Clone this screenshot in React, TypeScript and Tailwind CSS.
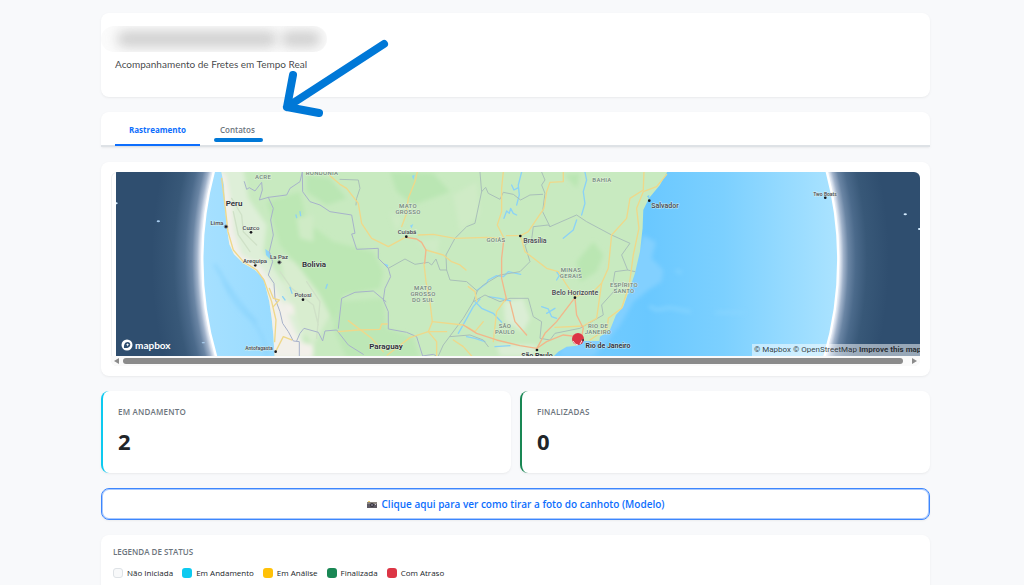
import { useState } from "react"
import clsx from "clsx"

type Label = {
  text: string[]
  x: number
  y: number
  className: string
}

const COUNTRY = "fill-[#2c2c38] text-[8px] font-semibold"
const CITY = "fill-[#45454f] text-[7px] font-medium"
const SMALL = "fill-[#45454f] text-[6px] font-medium"
const STATE = "fill-[#72857a] text-[6px] font-medium tracking-wider"

const labels: Label[] = [
  { text: ["Peru"], x: 234, y: 206, className: COUNTRY },
  { text: ["Bolivia"], x: 314, y: 267, className: COUNTRY },
  { text: ["Paraguay"], x: 386, y: 349, className: COUNTRY },
  { text: ["Lima"], x: 217, y: 225, className: SMALL },
  { text: ["Cuzco"], x: 251, y: 230, className: SMALL },
  { text: ["Arequipa"], x: 255, y: 263, className: SMALL },
  { text: ["La Paz"], x: 279, y: 259, className: SMALL },
  { text: ["Potosí"], x: 303, y: 297, className: SMALL },
  { text: ["Antofagasta"], x: 259, y: 350, className: "fill-[#45454f] text-[5px] font-medium" },
  { text: ["Cuiabá"], x: 407, y: 234, className: SMALL },
  { text: ["Brasília"], x: 535, y: 243, className: CITY },
  { text: ["Salvador"], x: 665, y: 208, className: CITY },
  { text: ["Belo Horizonte"], x: 575, y: 295, className: CITY },
  { text: ["São Paulo"], x: 537, y: 358, className: "fill-[#2c2c38] text-[7px] font-semibold" },
  { text: ["Rio de Janeiro"], x: 608, y: 348, className: "fill-[#2c2c38] text-[7px] font-semibold" },
  { text: ["Two Boats"], x: 825, y: 196, className: "fill-[#45454f] text-[5px] font-medium" },
  { text: ["ACRE"], x: 263, y: 179, className: STATE },
  { text: ["RONDÔNIA"], x: 322, y: 175, className: STATE },
  { text: ["MATO", "GROSSO"], x: 408, y: 208, className: STATE },
  { text: ["MATO", "GROSSO", "DO SUL"], x: 423, y: 290, className: STATE },
  { text: ["GOIÁS"], x: 496, y: 242, className: STATE },
  { text: ["SÃO", "PAULO"], x: 505, y: 328, className: STATE },
  { text: ["BAHIA"], x: 602, y: 182, className: STATE },
  { text: ["MINAS", "GERAIS"], x: 571, y: 272, className: STATE },
  { text: ["ESPÍRITO", "SANTO"], x: 624, y: 287, className: STATE },
  { text: ["RIO DE", "JANEIRO"], x: 598, y: 328, className: STATE },
]

const cities = [
  [378, 215], [453, 232], [466, 331], [538, 322], [609, 434], [527, 590],
  [919, 245], [1261, 243], [1648, 137], [1425, 428], [1311, 585], [2176, 128],
]

const borders = [
  "M433 80L440 103L448 98L465 108L485 82L487 105L478 135L505 127L560 120L570 100L600 80L607 51",
  "M505 127L520 160L512 195L520 240L508 290L518 320L505 360L522 385L525 430L540 470L548 505L565 530L580 558L598 560L598 603",
  "M590 558L600 535L612 520L655 532L668 558L675 528L710 525L745 570L790 598",
  "M607 51L608 110L630 140L660 150L690 170L755 180L765 235L755 237L770 283L835 280L835 310L865 340L872 365L855 400L850 435L865 470L865 522L920 532L950 545L968 603",
  "M715 520L725 430L765 412L820 408L858 440",
  "M968 603L1000 598L1010 603",
]

const states = [
  "M720 73L775 75L780 100L770 130L768 150",
  "M865 340L915 312L945 328L985 322L995 330L1008 312L1020 345L1040 345",
  "M1040 345L1038 300L1065 250L1100 215L1125 205L1145 110L1140 51",
  "M1040 345L1050 375L1100 380L1132 408L1120 440L1090 490L1030 570L1015 603",
  "M1145 110L1157 97L1165 115L1200 133L1210 112L1240 118L1262 135L1290 120L1328 118",
  "M1325 51L1335 75L1325 90L1335 115L1328 170L1350 215L1430 180L1460 200L1535 240L1590 265L1565 300L1583 345L1545 350L1540 380L1550 400L1505 450L1510 480L1440 520L1365 535L1350 555L1320 550L1325 500L1300 485L1285 430L1230 430L1200 440L1155 420L1120 440",
  "M1350 215L1345 210L1300 215L1295 255L1275 270L1290 320L1260 350L1200 360L1150 390L1132 408",
  "M1583 345L1605 350",
  "M1050 545L1110 540L1150 555L1165 575",
]

const roads = [
  "M690 62L720 88L740 100L775 145L785 205L815 250L840 262L865 275L920 245",
  "M952 51L945 80L925 130L918 180L905 215",
  "M955 240L1000 238L1065 250L1160 247L1200 250M1220 242L1255 242",
  "M978 285L1030 300L1055 320L1080 330L1098 345",
  "M1210 51L1205 100L1205 170L1192 210L1212 250",
  "M1219 430L1190 470L1180 560",
  "M997 500L1090 510M715 530L775 525L840 523L845 507L862 507",
  "M745 497L815 550L850 590M862 600L930 548L985 530L1010 560L1010 603",
  "M972 325L978 380L990 440L997 500L985 530L1040 530M1060 555L1090 575L1115 603",
  "M1105 395L1125 410L1130 440M1150 500L1125 530L1100 515",
  "M1390 51L1390 80L1350 82L1340 110L1332 160L1285 230L1262 242L1275 290L1340 340L1375 350L1400 390L1425 425",
  "M1425 425L1480 410L1505 385L1525 340L1535 240L1580 190L1590 130L1630 105L1632 51",
  "M1700 58L1670 95L1630 110L1610 160L1617 220L1600 300L1588 390L1565 460L1525 490L1522 520L1470 555",
  "M1505 385L1490 490L1450 513L1365 517",
  "M365 70L375 150L384 230L400 285L430 320L470 345L492 375L515 440L528 495L524 560",
  "M527 590L550 545L575 555M508 400L520 430L538 435L520 455",
]

const highways = [
  "M920 247L950 252L965 262L978 285L974 325",
  "M1212 250L1205 310L1205 370L1219 430L1216 437",
  "M1090 510L1130 535L1190 555L1260 572L1311 580L1340 560L1390 540L1433 545",
  "M1425 428L1370 500L1335 535L1311 580",
  "M1425 428L1430 480L1450 520L1445 545",
  "M1230 440L1245 500L1280 540",
]

const rivers = [
  "M1212 190L1220 168L1228 175L1232 160L1240 175L1250 180",
  "M1235 90L1242 105L1255 98",
  "M1132 405L1160 385L1165 375L1190 362L1210 365L1225 350L1262 358",
  "M1125 440L1145 460L1180 475L1205 502",
  "M1075 535L1095 500L1120 455L1140 432M1165 425L1200 430L1232 438",
  "M1100 545L1125 550L1155 560M1185 575L1230 572",
  "M1265 51L1255 90L1258 120L1250 150M1430 195L1420 225L1390 250",
  "M1325 455L1345 462L1355 485L1370 490M1340 475L1365 460M1370 350L1378 362L1370 375",
  "M1455 51L1460 75L1450 110L1455 145L1445 180",
  "M588 180L590 188M600 170L602 182M548 425L555 435M570 397L576 415M678 400L682 388",
]

function MapLabels() {
  return (
    <g className="font-[Roboto,sans-serif] [paint-order:stroke]" stroke="#eef7ea" strokeOpacity=".65" strokeWidth="1" textAnchor="middle">
      {labels.map(({ text, x, y, className }) => (
        <text key={text.join(" ") + x} className={className}>
          {text.map((line, i) => (
            <tspan key={line} x={x} y={y + i * 6}>
              {line}
            </tspan>
          ))}
        </text>
      ))}
    </g>
  )
}

function FreightMap() {
  return (
    <svg viewBox="116 172 804 184" preserveAspectRatio="xMidYMid slice" className="block h-[184px] w-full" role="img" aria-label="Mapa de fretes">
      <defs>
        <radialGradient id="glow">
          <stop offset=".86" stopColor="#ffffff" />
          <stop offset=".868" stopColor="#dfe6f1" />
          <stop offset=".877" stopColor="#a0b2ca" />
          <stop offset=".89" stopColor="#6a85a4" />
          <stop offset=".91" stopColor="#4b6a8b" />
          <stop offset=".94" stopColor="#385878" />
          <stop offset="1" stopColor="#2f4e6f" />
        </radialGradient>
        <linearGradient id="sea">
          <stop offset="0" stopColor="#a6e0ff" />
          <stop offset=".12" stopColor="#98dbff" />
          <stop offset=".7" stopColor="#6ac8ff" />
          <stop offset=".82" stopColor="#7cd0ff" />
          <stop offset="1" stopColor="#abe3ff" />
        </linearGradient>
        <filter id="soft" x="-20%" y="-20%" width="140%" height="140%">
          <feGaussianBlur stdDeviation="7" />
        </filter>
        <clipPath id="land">
          <path d="M362 40L372 90L375 150L380 215L388 268L402 298L430 325L465 345L490 370L498 400L508 440L515 490L520 540L524 610L1355 610L1375 590L1400 575L1430 572L1450 558L1498 558L1500 545L1530 525L1540 500L1548 480L1570 455L1588 405L1605 355L1620 290L1628 220L1630 165L1647 130L1680 90L1705 45Z" />
        </clipPath>
      </defs>
      <rect x="0" y="0" width="1100" height="600" fill="#2f4e6f" />
      <g transform="translate(100 155) scale(.3333)" fill="none" strokeLinejoin="round" strokeLinecap="round">
        <g fill="#d5ecff">
          <ellipse cx="49" cy="145" rx="4" ry="3" />
          <ellipse cx="2416" cy="178" rx="5" ry="3" />
          <ellipse cx="2458" cy="222" rx="4" ry="3" />
        </g>
        <ellipse cx="1261" cy="315" rx="1106" ry="1151" fill="url(#glow)" />
        <g fill="#a9cdf0">
          <ellipse cx="175" cy="199" rx="5" ry="3" />
          <ellipse cx="310" cy="563" rx="5" ry="2" />
        </g>
        <ellipse cx="1261" cy="315" rx="954" ry="992" fill="url(#sea)" stroke="#fff" strokeWidth="7" />
        <g filter="url(#soft)">
          <path d="M1630 240L1668 262L1655 310L1690 345L1685 380L1645 405L1600 440L1560 510L1520 560L1480 603L1380 603L1400 500L1590 350Z" fill="#82d0ff" />
          <path d="M360 350Q385 430 440 480T500 603M345 330Q410 440 470 500" stroke="#8fd6fd" strokeWidth="8" />
          <path d="M1730 348L1742 352M1650 455L1670 465L1710 458L1770 470M1850 473L1930 472" stroke="#8ad6ff" strokeWidth="7" />
        </g>
        <g clipPath="url(#land)">
          <rect x="300" y="40" width="1450" height="580" fill="#c8eac0" />
          <g filter="url(#soft)">
            <path d="M350 40L430 40L445 130L500 210L490 290L560 400L620 480L600 610L500 610L500 400L380 290Z" fill="#deefd8" />
            <path d="M350 40L378 60L395 150L402 230L425 300L480 330L520 390L560 470L590 540L640 610L500 610L490 390L370 290Z" fill="#f2f0ea" />
            <path d="M540 300L600 330L670 380L690 480L640 570L600 520L555 400Z" fill="#d8edcf" />
            <path d="M500 140L600 110L620 200L700 260L820 290L850 350L840 400L730 420L700 500L660 420L600 340L540 270Z" fill="#bce7b4" />
            <path d="M720 440L850 430L860 520L940 545L960 610L740 610L700 520Z" fill="#bde7b6" />
            <path d="M870 50L1000 55L1050 110L940 150L890 110ZM620 60L690 70L740 130L680 150L620 110Z" fill="#bae6b3" />
            <path d="M1430 320L1480 260L1510 300L1490 350L1440 380ZM1395 60L1440 55L1430 100Z" fill="#bae6b2" />
            <path d="M1210 440L1270 430L1290 490L1270 530L1215 500ZM1190 570L1310 570L1300 603L1200 603Z" fill="#dbeed5" />
            <path d="M1060 120L1130 80L1140 180L1080 230ZM950 260L1020 250L1010 300ZM590 190L640 180L640 260L600 250ZM870 170L910 190L890 230Z" fill="#cfebc6" />
            <path d="M550 440L580 450L585 480L560 475ZM600 560L640 570L640 603L600 603Z" fill="#f3f0ea" />
          </g>
          <path d="M395 130L425 180L430 230L470 270M400 170L415 240L450 290M540 350L575 400L640 450L655 510M620 380L660 440L650 550" stroke="#cfe1c7" strokeWidth="4" />
        </g>
        <path d="M496 282L508 290L515 302L510 312L498 300Z M852 325L865 330L862 340Z M930 212L940 207L935 220Z M936 62L944 60L940 75Z" fill="#8cd4fa" />
        <path d="M1641 124L1648 120L1648 132Z" fill="#7ccefc" />
        {rivers.map((d) => (
          <path key={d} d={d} stroke="#8bd2f6" strokeWidth="4" />
        ))}
        {states.map((d) => (
          <path key={d} d={d} stroke="#a9bfb9" strokeWidth="3" />
        ))}
        {borders.map((d) => (
          <path key={d} d={d} stroke="#a7b2ca" strokeWidth="3" />
        ))}
        {roads.map((d) => (
          <path key={d} d={d} stroke="#efd88a" strokeWidth="4" />
        ))}
        {highways.map((d) => (
          <path key={d} d={d} stroke="#f2b68a" strokeWidth="4" />
        ))}
        <g fill="#17171d">
          {cities.map(([cx, cy]) => (
            <circle key={cx} cx={cx} cy={cy} r="4" />
          ))}
        </g>
        <g stroke="#66666f" strokeWidth="2">
          <circle cx="378" cy="215" r="5" />
          <circle cx="538" cy="322" r="5" />
        </g>
      </g>
      <MapLabels />
      <g>
        <circle cx="578" cy="339" r="6" fill="#dc3545" />
        <path d="M573 341Q575 345 578 345M580 344L583 339" fill="none" stroke="#f7dfe2" strokeWidth="1" />
        <circle cx="583" cy="340" r="1" fill="#3a2630" />
      </g>
    </svg>
  )
}

function MapboxLogo() {
  return (
    <a href="#mapbox" className="absolute bottom-1 left-[5px] flex items-center gap-[2px] font-[Lato,sans-serif] text-[10px] leading-[14px] font-bold text-white">
      <svg viewBox="0 0 12 12" className="size-3">
        <circle cx="6" cy="6" r="5.5" fill="#fff" />
        <path d="M3 9C2.6 6 3.8 3 6.6 3A2.8 2.8 0 0 1 9.3 5.7C9.3 8.4 6 9.5 3 9Z" fill="#2f4e6f" />
        <path d="M6.6 4L7.1 5.2L8.3 5.7L7.1 6.2L6.6 7.4L6.1 6.2L4.9 5.7L6.1 5.2Z" fill="#fff" />
      </svg>
      mapbox
    </a>
  )
}

function MapScrollbar() {
  return (
    <div className="flex h-[10px] items-center gap-1 bg-[#fafafa] px-[3px]">
      <svg viewBox="0 0 5 6" className="h-[6px] w-[5px] shrink-0">
        <path d="M5 0V6L0 3Z" fill="#8b8b8b" />
      </svg>
      <div className="mr-[5px] h-[6px] flex-1 rounded-full bg-[#8b8b8b]" />
      <svg viewBox="0 0 5 6" className="h-[6px] w-[5px] shrink-0">
        <path d="M0 0V6L5 3Z" fill="#8b8b8b" />
      </svg>
    </div>
  )
}

function StatCard({ title, value, className }: { title: string; value: number; className: string }) {
  return (
    <div className={clsx("h-[82px] rounded-lg border-l-2 bg-white px-[15px] pt-[15px] shadow-sm shadow-black/5", className)}>
      <p className="text-[8px] leading-3 font-semibold tracking-wide text-[#6c757d]">{title}</p>
      <p className="mt-[7px] text-[22px] leading-8 font-bold text-[#212529]">{value}</p>
    </div>
  )
}

const legend = [
  { name: "Não Iniciada", color: "bg-[#f8f9fa] border border-[#dee2e6]" },
  { name: "Em Andamento", color: "bg-[#0dcaf0]" },
  { name: "Em Análise", color: "bg-[#ffc107]" },
  { name: "Finalizada", color: "bg-[#198754]" },
  { name: "Com Atraso", color: "bg-[#dc3545]" },
]

const tabs = ["Rastreamento", "Contatos"]

export default function App() {
  const [activeTab, setActiveTab] = useState(tabs[0])

  return (
    <div className="relative min-h-screen bg-[#f8f9fb] font-['Open_Sans','Noto_Sans',sans-serif] text-[#212529]">
      <main className="flex flex-col gap-[15px] pt-[13px] pr-[94px] pb-4 pl-[101px]">
        <header className="h-[84px] rounded-lg bg-white pt-[13px] shadow-sm shadow-black/5">
          <div aria-hidden className="flex h-[26px] w-[226px] items-center gap-1 overflow-hidden rounded-full bg-[#fbfbfb] pl-4">
            <div className="h-4 w-[160px] rounded-full bg-[#d0d0d0] blur-[6px]" />
            <div className="h-4 w-10 rounded-full bg-[#d0d0d0] blur-[6px]" />
          </div>
          <p className="mt-1 ml-[14px] font-[Lato,sans-serif] text-[10px] leading-4 text-[#212529]/85">Acompanhamento de Fretes em Tempo Real</p>
        </header>

        <nav className="flex h-[35px] rounded-t-lg border-b-2 border-[#dee2e6] bg-white px-[14px] shadow-sm shadow-black/5">
          {tabs.map((tab) => (
            <button
              key={tab}
              type="button"
              onClick={() => setActiveTab(tab)}
              className={clsx(
                "h-[34px] border-b-2 px-[14px] pt-1 text-[8px] leading-3",
                tab === activeTab ? "mr-[6px] border-[#0d6efd] font-bold text-[#0d6efd]" : "border-transparent font-semibold text-[#6c757d]",
              )}
            >
              {tab}
            </button>
          ))}
        </nav>

        <section className="rounded-lg bg-white p-[10px] shadow-sm shadow-black/5">
          <div className="overflow-hidden rounded-md shadow-[inset_0_0_0_1px_#eef0f2]">
            <div className="relative ml-[5px] overflow-hidden rounded-tr">
              <FreightMap />
              <MapboxLogo />
              <div className="absolute right-0 bottom-0 flex h-3 w-[168px] gap-[2px] overflow-hidden bg-white/50 pl-[2px] font-[Roboto,sans-serif] text-[8px] leading-3 whitespace-nowrap text-black/75">
                <a href="#mapbox">© Mapbox</a>
                <a href="#osm">© OpenStreetMap</a>
                <a href="#improve" className="font-bold">
                  Improve this map
                </a>
              </div>
            </div>
            <MapScrollbar />
          </div>
        </section>

        <section className="grid grid-cols-2 gap-[9px]">
          <StatCard title="EM ANDAMENTO" value={2} className="border-[#0dcaf0]" />
          <StatCard title="FINALIZADAS" value={0} className="border-[#198754]" />
        </section>

        <button
          type="button"
          className="flex h-8 items-center justify-center gap-[5px] rounded-lg border border-[#3d86fd] bg-white text-[10px] leading-4 font-semibold text-[#0d6efd] shadow-[inset_0_0_0_1px_#a9c9fe,0_1px_2px_#0000000d]"
        >
          <svg viewBox="0 0 10 8" className="h-2 w-[10px]">
            <path d="M0 2H10V8H0Z" fill="#5d5963" />
            <path d="M0 2H10V4H0Z" fill="#8b8580" />
            <path d="M1 1H3V2H1Z" fill="#f3d06a" />
            <circle cx="5" cy="5" r="2" fill="#37343d" />
            <circle cx="5" cy="5" r="1" fill="#817b8d" />
            <path d="M8 4H9V5H8Z" fill="#c9c4cf" />
          </svg>
          Clique aqui para ver como tirar a foto do canhoto (Modelo)
        </button>

        <section className="rounded-lg bg-white px-3 pt-[11px] pb-5 shadow-sm shadow-black/5">
          <h2 className="text-[8px] leading-3 font-semibold text-[#6c757d]">LEGENDA DE STATUS</h2>
          <ul className="mt-[9px] flex gap-[9px]">
            {legend.map(({ name, color }) => (
              <li key={name} className="flex items-center gap-1 text-[8px] leading-3">
                <span className={clsx("size-[10px] rounded-[3px]", color)} />
                {name}
              </li>
            ))}
          </ul>
        </section>
      </main>

      <svg viewBox="0 0 176 105" className="pointer-events-none absolute top-[38px] left-[213px] h-[105px] w-[176px]" aria-hidden>
        <g fill="none" stroke="#0078d7" strokeLinecap="round" strokeLinejoin="round">
          <path d="M171 6L74 69M80 37L74 69L106 75" strokeWidth="8" />
          <path d="M3 102H48" strokeWidth="4" />
        </g>
      </svg>
    </div>
  )
}
